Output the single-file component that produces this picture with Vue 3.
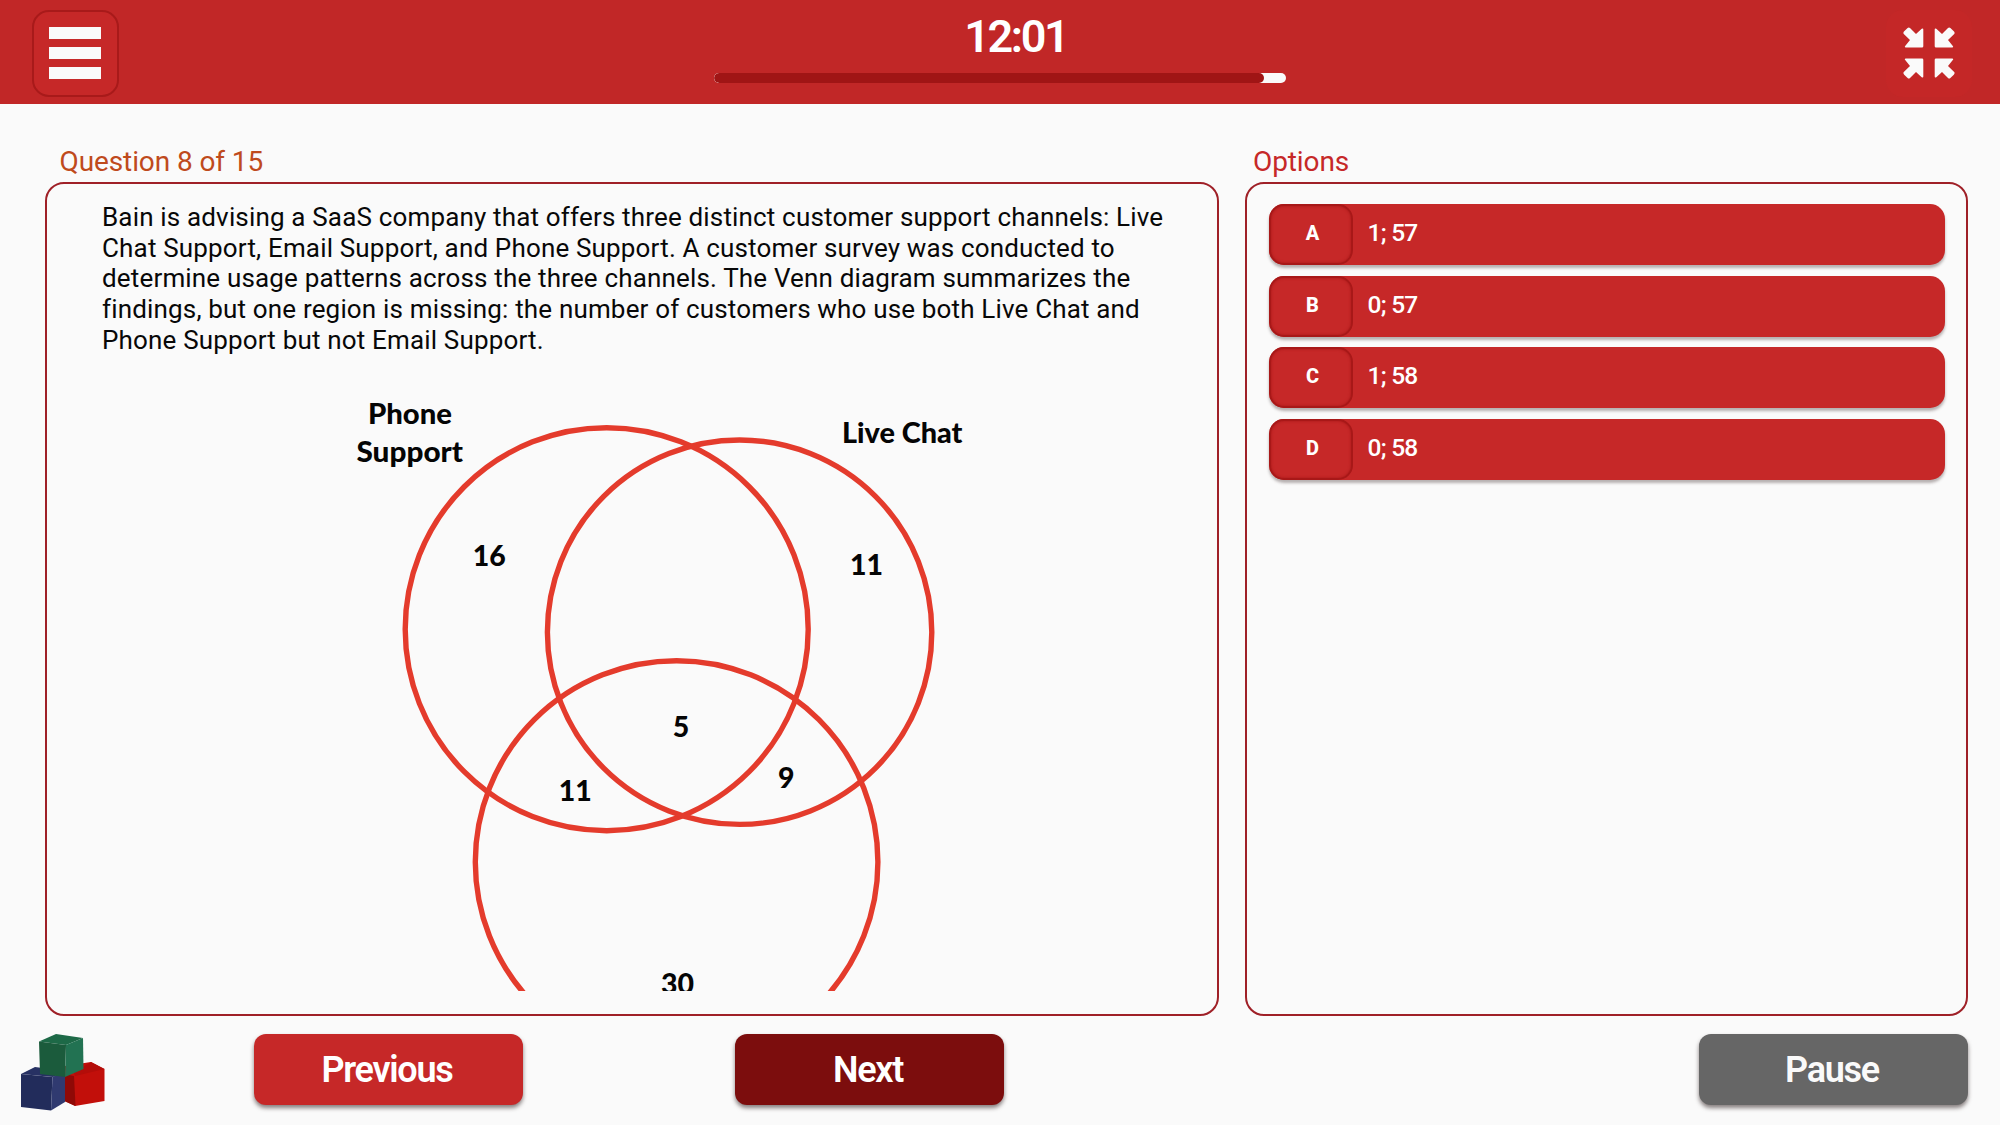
<script setup>
const options = [
  { key: 'A', text: '1; 57' },
  { key: 'B', text: '0; 57' },
  { key: 'C', text: '1; 58' },
  { key: 'D', text: '0; 58' },
]
const lines = [
  'Bain is advising a SaaS company that offers three distinct customer support channels: Live',
  'Chat Support, Email Support, and Phone Support. A customer survey was conducted to',
  'determine usage patterns across the three channels. The Venn diagram summarizes the',
  'findings, but one region is missing: the number of customers who use both Live Chat and',
  'Phone Support but not Email Support.',
]
const circles = [
  { cx: 606.7, cy: 629.2, r: 201.5 },
  { cx: 739.6, cy: 632.2, r: 192.2 },
  { cx: 676.6, cy: 862, r: 201.3 },
]
const labels = [
  { t: 'Phone', x: 368, y: 423.8, w: 84 },
  { t: 'Support', x: 356.5, y: 462.2, w: 106.5 },
  { t: 'Live Chat', x: 842, y: 443, w: 120.5 },
  { t: '16', x: 472.7, y: 566.3, w: 33 },
  { t: '11', x: 850, y: 575.4, w: 33 },
  { t: '5', x: 672.8, y: 737.3, w: 16.5 },
  { t: '11', x: 558.7, y: 801, w: 33 },
  { t: '9', x: 778, y: 788.3, w: 16.5 },
  { t: '30', x: 661, y: 994.3, w: 33 },
]
const elapsed = 96.2
</script>

<template>
  <div class="app">
    <header class="topbar">
      <button class="menu" aria-label="Menu"><i></i><i></i><i></i></button>
      <div class="clock">
        <div class="time">12:01</div>
        <div class="track"><div class="fill" :style="{ width: elapsed + '%' }"></div></div>
      </div>
      <button class="shrink" aria-label="Exit full screen">
        <svg viewBox="0 0 52 52" width="52" height="52">
          <defs>
            <path id="arrow" d="M1.2 4.3 L4.6 1 Q5.8 -.2 7 1 L13 7 L18.7 1.8 Q20.3 .9 20.3 2.6 V19.3 Q20.3 20.6 19 20.6 H2.8 Q1.2 20.3 2.2 18.9 L7 13 L.8 7 Q-.2 5.700 1.200 4.300 Z" />
          </defs>
          <g fill="#fafafa">
            <use href="#arrow" />
            <use href="#arrow" transform="translate(52 0) scale(-1 1)" />
            <use href="#arrow" transform="translate(0 52) scale(1 -1)" />
            <use href="#arrow" transform="translate(52 52) scale(-1 -1)" />
          </g>
        </svg>
      </button>
    </header>

    <main class="content">
      <section class="question">
        <h2 class="q-title">Question 8 of 15</h2>
        <div class="panel">
          <div class="scroll">
            <p class="prompt"><span v-for="l in lines" :key="l">{{ l }}</span></p>
            <svg class="venn" viewBox="340 370 640 700" width="640" height="700">
              <circle v-for="c in circles" :key="c.cx" v-bind="c" />
              <text v-for="(l, i) in labels" :key="i" :x="l.x" :y="l.y" :textLength="l.w" lengthAdjust="spacingAndGlyphs">{{ l.t }}</text>
            </svg>
          </div>
        </div>
      </section>
      <section class="answers">
        <h2 class="o-title">Options</h2>
        <div class="panel list">
          <button v-for="o in options" :key="o.key" class="option">
            <span class="key">{{ o.key }}</span>
            <span class="value">{{ o.text }}</span>
          </button>
        </div>
      </section>
    </main>

    <footer class="bottom">
      <svg class="logo" viewBox="0 0 84 78" width="84" height="78">
        <path fill="#c20f0a" d="M44 32 L70 28 L83.500 35 V67 L54 72 L44 67Z" />
        <path fill="#8f0906" d="M43 40 L53 42 L54.500 72 L43 67Z" />
        <path fill="#b30d09" d="M53 39 L70 28 L83.500 35 L54 42Z" />
        <path fill="#222c5b" d="M0 40 L31.500 43 L30 76.500 L0 73Z" />
        <path fill="#273163" d="M0 40 L14 33 L44 37 L32 43Z" />
        <path fill="#303a70" d="M31.500 43 L44 37 V68 L30 76.500Z" />
        <path fill="#1d6947" d="M18 7.500 L35 0 L62 4 L45 11Z" />
        <path fill="#1b5b3c" d="M18 7.500 L45 11 L44 43 L19 40Z" />
        <path fill="#227252" d="M45 11 L62 4 L62.500 35 L44 43Z" />
      </svg>
      <button class="btn prev"><span>Previous</span></button>
      <button class="btn next"><span>Next</span></button>
      <button class="btn pause"><span>Pause</span></button>
    </footer>
  </div>
</template>

<style>
body { background: #fafafa; overflow: hidden; }
</style>

<style scoped>
* { box-sizing: border-box; }
.app {
  width: 2000px; height: 1125px; overflow: hidden;
  display: flex; flex-direction: column;
  background: #fafafa; font-family: Roboto, sans-serif; color: #080808;
}
button { border: 0; padding: 0; font: inherit; }
.topbar {
  height: 104px; flex: none; background: #c12727;
  display: flex; align-items: flex-start; justify-content: space-between;
  padding: 9.500px 28px 0 31.500px;
}
.menu {
  width: 87px; height: 87px; border-radius: 17px; background: #c62828;
  border: 2px solid #a81a1a; display: flex; flex-direction: column;
  align-items: center; gap: 8px; padding: 15px 0 0 0;
}
.menu i { width: 52px; height: 12px; background: #fafafa; flex: none; }
.clock { width: 572px; margin: .5px 0 0 -5px; display: flex; flex-direction: column; align-items: center; }
.time {
  height: 63px; color: #fff; font-size: 45px; font-weight: 600; line-height: 53px;
  letter-spacing: -2.400px; padding-left: 32px;
}
.track { width: 572px; height: 10px; border-radius: 5px; background: #fafafa; overflow: hidden; }
.fill { height: 100%; border-radius: 5px; background: #a01515; }
.shrink {
  width: 86px; height: 87px; border-radius: 17px; background: #c42727;
  display: flex; align-items: center; justify-content: center;
}
.content { display: flex; gap: 26px; height: 912px; flex: none; padding: 38px 32px 0 45px; }
.question { width: 1174px; display: flex; flex-direction: column; }
.answers { flex: 1; display: flex; flex-direction: column; }
h2 { margin: 0; height: 40px; line-height: 39px; font-weight: 400; font-size: 28px; white-space: nowrap; letter-spacing: -.1px; }
.q-title { color: #bf4a1c; padding-left: 14.500px; }
.o-title { color: #c62828; padding-left: 8px; }
.panel { flex: 1; border: 2px solid #9f2027; border-radius: 19px; background: #fafafa; min-height: 0; }
.scroll { height: 806.500px; overflow: hidden; padding: 18px 0 0 55px; }
.prompt { margin: 0; height: 168px; font-size: 26px; line-height: 30.700px; letter-spacing: .165px; }
.prompt span { display: block; white-space: nowrap; }
.venn { display: block; margin-left: 238px; }
.venn circle { fill: none; stroke: #e43b2c; stroke-width: 5.400; }
.venn text { font: 900 29px Lato, sans-serif; fill: #050505; }
.list { display: flex; flex-direction: column; gap: 10.500px; padding: 20px 21px 0 22px; }
.option {
  height: 61px; flex: none; border-radius: 15px; background: #c62828; color: #fff;
  display: flex; align-items: stretch; box-shadow: 0 3px 3px rgba(70, 55, 55, .38);
}
.key {
  width: 84px; border-radius: 15px; border: 2px solid #a81818; box-shadow: inset 0 0 3px #a81818;
  font-size: 20px; font-weight: 800; line-height: 55px; text-align: center; padding-left: 3px;
}
.value { font-size: 24.500px; line-height: 58px; font-weight: 500; padding-left: 14.500px; letter-spacing: -.75px; }
.bottom { flex: 1; display: flex; align-items: flex-start; padding: 18px 32px 0 21px; }
.logo { margin-top: -.5px; }
.btn {
  width: 269px; height: 71px; border-radius: 12px; color: #fff; font-size: 36px; font-weight: 600;
  letter-spacing: -1.250px; line-height: 70px; padding-right: 3px; box-shadow: 0 3px 4px rgba(40, 25, 25, .55);
}
.prev { margin-left: 149px; background: #c62828; }
.next { margin-left: 212px; background: #7c0d0d; }
.pause { margin-left: auto; background: #666; color: #fafafa; }
</style>
